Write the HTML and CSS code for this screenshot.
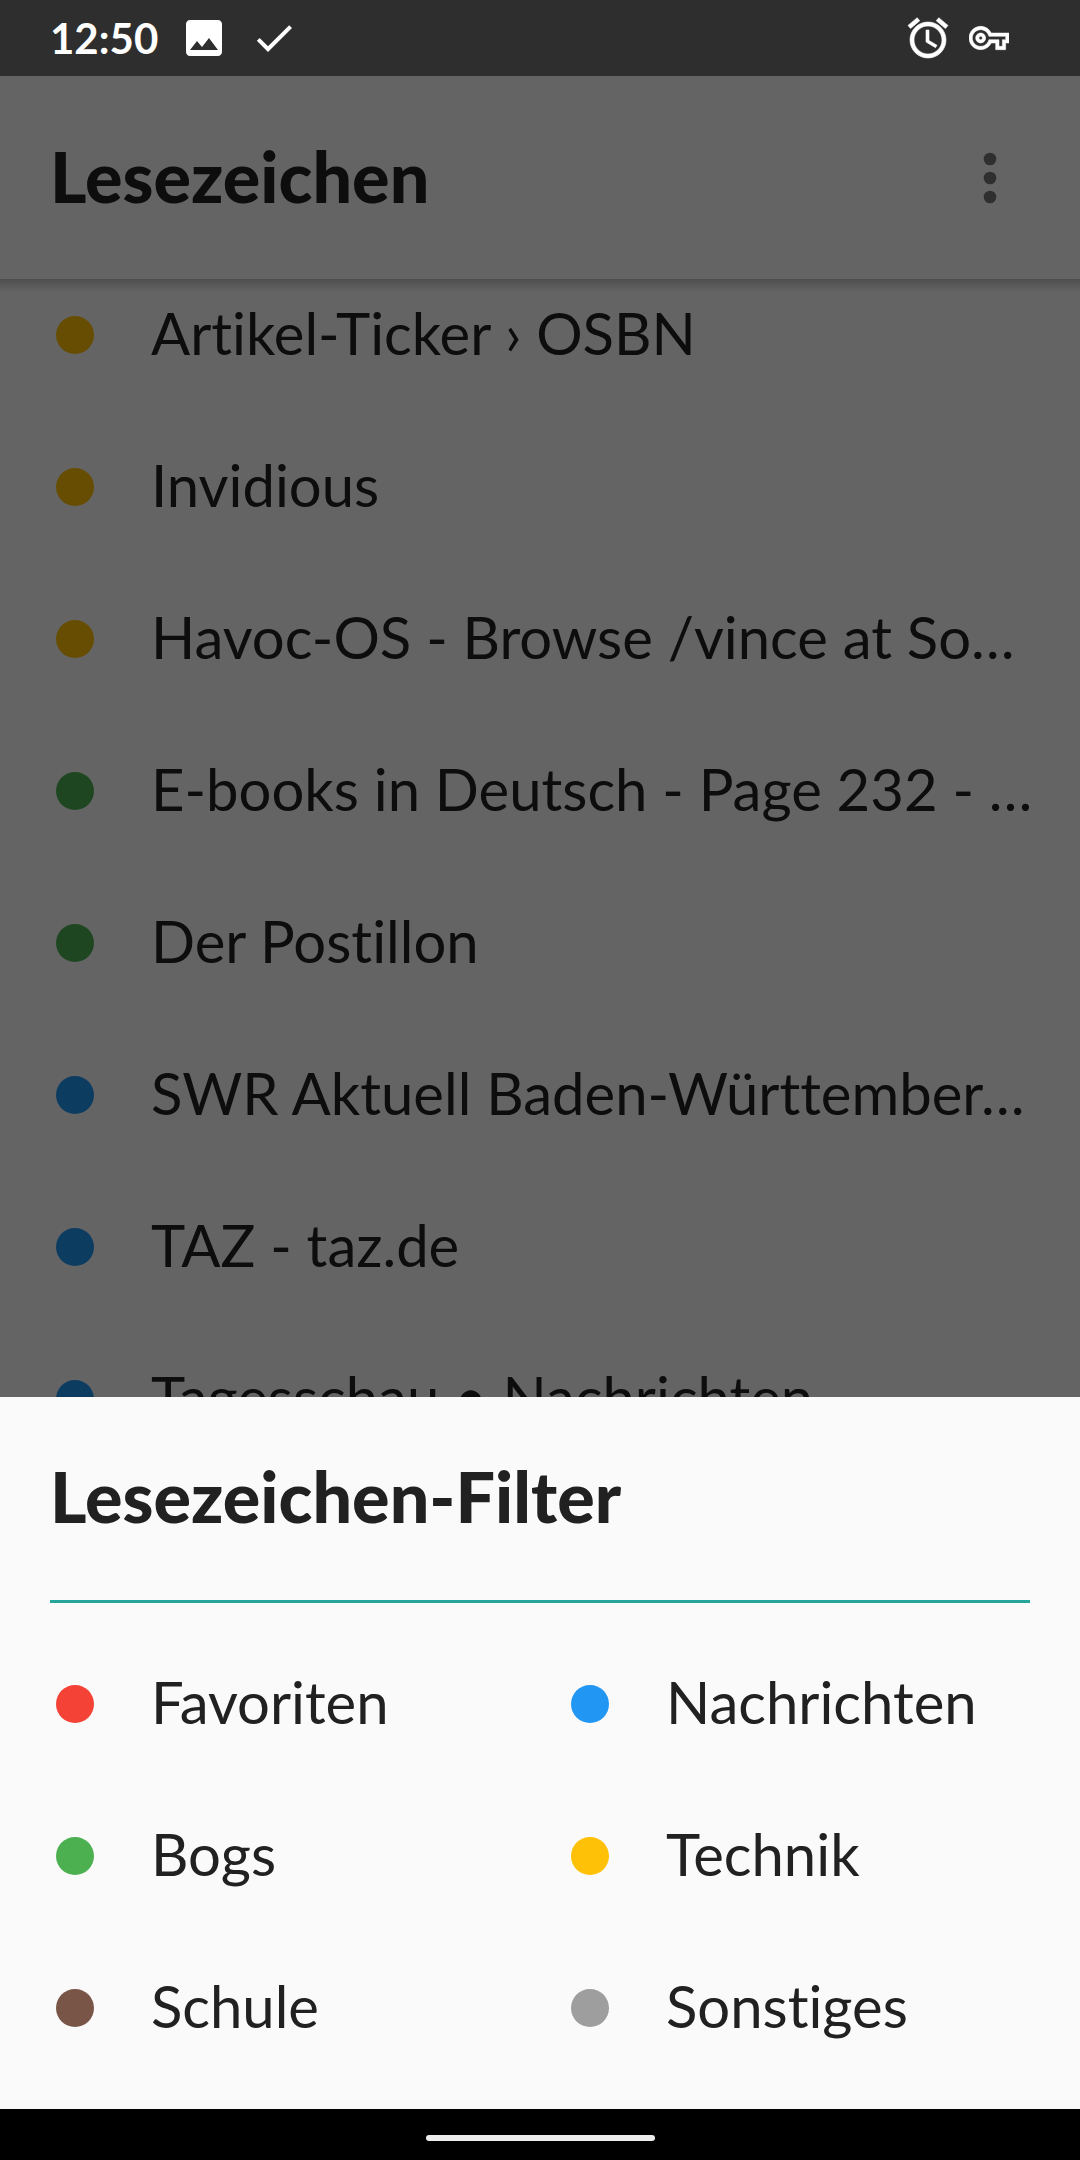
FILE: index.html
```html
<!DOCTYPE html>
<html lang="de">
<head>
  <meta charset="utf-8">
  <meta name="viewport" content="width=device-width, initial-scale=1">
  <title>Lesezeichen</title>
  <link rel="stylesheet" href="styles.css">
</head>
<body>
  <div class="statusbar">
    <div class="status-left">
      <time class="clock">12:50</time>
      <svg class="icon" viewBox="0 0 24 24" aria-hidden="true"><path d="M21 19V5c0-1.1-.9-2-2-2H5c-1.1 0-2 .9-2 2v14c0 1.1.9 2 2 2h14c1.1 0 2-.9 2-2zM8.500 13.500l2.500 3.010L14.500 12l4.500 6H5l3.500-4.500z"/></svg>
      <svg class="icon" viewBox="0 0 24 24" aria-hidden="true"><path d="M9 16.170L4.830 12l-1.420 1.410L9 19 21 7l-1.410-1.410z"/></svg>
    </div>
    <div class="status-right">
      <svg class="icon" viewBox="0 0 24 24" aria-hidden="true"><path stroke="currentColor" stroke-width=".3" d="M22 5.720l-4.600-3.860-1.290 1.530 4.600 3.860L22 5.720zM7.880 3.390L6.600 1.860 2 5.710l1.290 1.530 4.590-3.850zM12.500 8H11v6l4.750 2.850.75-1.230-4-2.370V8zM12 4c-4.970 0-9 4.030-9 9s4.020 9 9 9c4.970 0 9-4.030 9-9s-4.030-9-9-9zm0 16c-3.870 0-7-3.130-7-7s3.130-7 7-7 7 3.130 7 7-3.130 7-7 7z"/></svg>
      <svg class="icon icon-key" viewBox="0 0 24 24" aria-hidden="true"><path stroke="currentColor" stroke-width=".3" d="M22 19h-6v-4h-2.680c-1.140 2.420-3.600 4-6.320 4-3.860 0-7-3.140-7-7s3.140-7 7-7c2.720 0 5.170 1.580 6.320 4H24v6h-2v4zm-4-2h2v-4h2v-2H11.940l-.23-.67C11.010 8.340 9.110 7 7 7c-2.760 0-5 2.240-5 5s2.240 5 5 5c2.110 0 4.010-1.340 4.710-3.330l.23-.67H18v4zM7 15c-1.650 0-3-1.350-3-3s1.350-3 3-3 3 1.350 3 3-1.350 3-3 3zm0-4c-.55 0-1 .45-1 1s.45 1 1 1 1-.45 1-1-.45-1-1-1z"/></svg>
    </div>
  </div>

  <main class="screen">
    <header class="toolbar">
      <h1 class="title">Lesezeichen</h1>
      <button class="menu-button" type="button" aria-label="Menü">
        <svg class="menu-icon" viewBox="0 0 24 24" aria-hidden="true"><circle cx="12" cy="6" r="2"/><circle cx="12" cy="12" r="2"/><circle cx="12" cy="18" r="2"/></svg>
      </button>
    </header>
    <ul class="bookmarks">
      <li><a class="entry" href="#"><span class="dot amber"></span><span class="label">Artikel-Ticker › OSBN</span></a></li>
      <li><a class="entry" href="#"><span class="dot amber"></span><span class="label">Invidious</span></a></li>
      <li><a class="entry" href="#"><span class="dot amber"></span><span class="label">Havoc-OS - Browse /vince at So…</span></a></li>
      <li><a class="entry" href="#"><span class="dot green"></span><span class="label">E-books in Deutsch - Page 232 - …</span></a></li>
      <li><a class="entry" href="#"><span class="dot green"></span><span class="label">Der Postillon</span></a></li>
      <li><a class="entry" href="#"><span class="dot blue"></span><span class="label">SWR Aktuell Baden-Württember…</span></a></li>
      <li><a class="entry" href="#"><span class="dot blue"></span><span class="label">TAZ - taz.de</span></a></li>
      <li><a class="entry" href="#"><span class="dot blue"></span><span class="label">Tagesschau • Nachrichten</span></a></li>
    </ul>
    <div class="scrim"></div>
  </main>

  <section class="sheet" role="dialog" aria-labelledby="filter-title">
    <div class="sheet-header">
      <h2 class="title" id="filter-title">Lesezeichen-Filter</h2>
    </div>
    <div class="filters">
      <button class="entry" type="button"><span class="dot red"></span><span class="label">Favoriten</span></button>
      <button class="entry" type="button"><span class="dot blue"></span><span class="label">Nachrichten</span></button>
      <button class="entry" type="button"><span class="dot green"></span><span class="label">Bogs</span></button>
      <button class="entry" type="button"><span class="dot amber"></span><span class="label">Technik</span></button>
      <button class="entry" type="button"><span class="dot brown"></span><span class="label">Schule</span></button>
      <button class="entry" type="button"><span class="dot grey"></span><span class="label">Sonstiges</span></button>
    </div>
  </section>

  <nav class="navbar"><span class="pill"></span></nav>
</body>
</html>
```
FILE: styles.css
```css
* {
  box-sizing: border-box;
}

body {
  margin: 0;
  height: 100vh;
  display: flex;
  flex-direction: column;
  overflow: hidden;
  background: #fafafa;
  color: #212121;
  font-family: Lato, "Noto Sans", sans-serif;
  font-size: 58px;
  font-variant-ligatures: none;
}

/* System status bar */
.statusbar {
  flex: none;
  height: 76px;
  padding: 0 71px 0 50px;
  display: flex;
  align-items: center;
  justify-content: space-between;
  background: #2e2e2e;
  color: #fff;
}

.status-left,
.status-right {
  display: flex;
  align-items: center;
}

.status-left {
  gap: 22px;
}

.status-right {
  gap: 17px;
}

.clock {
  font-size: 42px;
  font-weight: 700;
  line-height: 76px;
}

.icon {
  width: 48px;
  height: 48px;
  fill: currentColor;
}

.icon-key {
  width: 40px;
  height: 40px;
}

/* Bookmark screen behind the sheet */
.screen {
  position: relative;
  flex: 1;
  min-height: 0;
  overflow: hidden;
}

.toolbar {
  height: 203px;
  padding: 0 52px 0 50px;
  display: flex;
  align-items: center;
  justify-content: space-between;
}

.title {
  margin: 0;
  padding-bottom: 4px;
  font-size: 70px;
  font-weight: 900;
  line-height: 76px;
}

.menu-button {
  padding: 0;
  border: 0;
  background: none;
  color: #757575;
}

.menu-icon {
  display: block;
  width: 76px;
  height: 76px;
  fill: currentColor;
}

/* The shadow of the toolbar falls on the top of the list */
.bookmarks {
  margin: 0;
  padding: 0 44px 0 50px;
  list-style: none;
  background: linear-gradient(rgba(0, 0, 0, 0.22), rgba(0, 0, 0, 0)) 0 0 / 100% 13px no-repeat;
}

/* The list is scrolled slightly under the toolbar */
.bookmarks li:first-child {
  margin-top: -20px;
}

.bookmarks {
  display: flex;
  flex-direction: column;
}

.scrim {
  position: absolute;
  inset: 0;
  background: rgba(0, 0, 0, 0.6);
}

.entry {
  width: 100%;
  height: 152px;
  padding: 0 0 0 6px;
  border: 0;
  display: flex;
  align-items: center;
  gap: 57px;
  background: none;
  color: inherit;
  font: inherit;
  text-align: left;
  text-decoration: none;
}

.label {
  padding-bottom: 4px;
  overflow: hidden;
  line-height: 72px;
  white-space: nowrap;
  text-overflow: ellipsis;
}

.dot {
  flex: none;
  width: 38px;
  height: 38px;
  border-radius: 50%;
}

.red { background: #f44336; }
.blue { background: #2196f3; }
.green { background: #4caf50; }
.amber { background: #ffc107; }
.brown { background: #795548; }
.grey { background: #9e9e9e; }

/* Filter sheet */
.sheet {
  flex: none;
  padding: 0 0 25px 50px;
  background: #fafafa;
}

.sheet-header {
  margin-right: 50px;
  padding: 61px 0 62px;
  border-bottom: 3px solid #26a69a;
}

.filters {
  padding-top: 25px;
  display: grid;
  grid-template-columns: 1fr 1fr;
}

.navbar {
  flex: none;
  height: 51px;
  padding-top: 7px;
  display: flex;
  align-items: center;
  justify-content: center;
  background: #000;
}

.pill {
  width: 229px;
  height: 6px;
  border-radius: 3px;
  background: #ececec;
}
```
